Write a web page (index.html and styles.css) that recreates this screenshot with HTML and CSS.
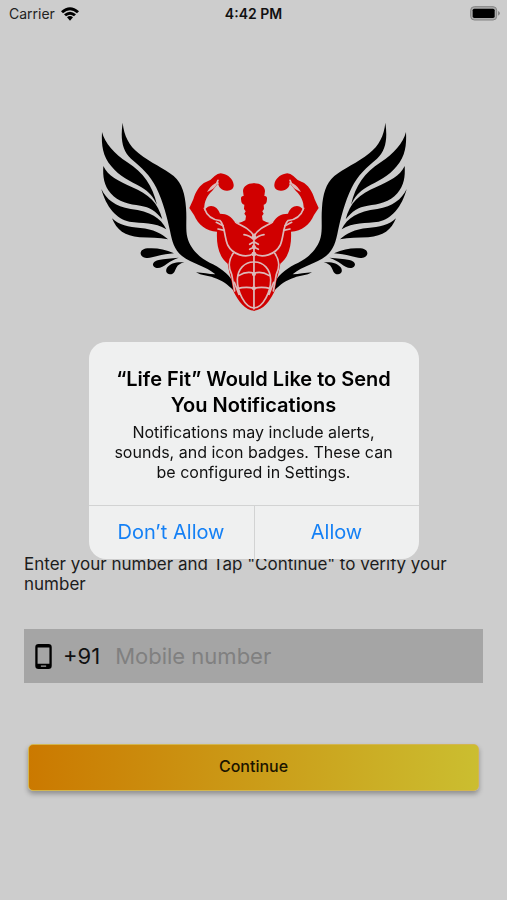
FILE: index.html
```html
<!DOCTYPE html>
<html lang="en">
<head>
<meta charset="utf-8">
<meta name="viewport" content="width=device-width, initial-scale=1">
<title>Life Fit</title>
<link rel="stylesheet" href="styles.css">
</head>
<body>
<div class="screen">
  <header class="status">
    <div class="carrier">
      <span>Carrier</span>
      <svg class="wifi" viewBox="0 0 54 42" aria-hidden="true">
        <path d="M0 13Q27-12 54 13L48 19Q27 0 6 19Z"/>
        <path d="M9 22Q27 6 45 22L39 28Q27 18 15 28Z"/>
        <path d="M18 31Q27 23 36 31L27 41Z"/>
      </svg>
    </div>
    <time class="clock">4:42 PM</time>
    <svg class="battery" viewBox="0 0 90 45" aria-hidden="true">
      <rect x="2" y="2" width="78" height="40" rx="11" fill="#aaa" stroke="#848484" stroke-width="3"/>
      <rect x="8" y="8" width="66" height="28" rx="5"/>
      <path d="M84 15Q90 18 90 22T84 29Z" fill="#888"/>
    </svg>
  </header>

  <main class="content">
    <svg class="logo" viewBox="30 33 924 576" role="img" aria-label="Life Fit">
      <defs>
        <g id="half">
          <g class="wing">
            <path d="M98 38C102 78 117 106 146 130C182 159 222 175 251 198C277 220 285 254 288 293C291 330 286 355 292 382C299 412 325 442 359 458C390 472 416 492 425 510Q433 524 430 541C415 524 395 510 372 503C352 496 334 497 318 487C338 488 356 493 376 493C348 468 306 462 276 438C252 418 246 392 240 362C232 325 220 276 199 233C182 197 154 172 123 146C96 122 91 85 98 38Z"/>
            <path d="M36 66C45 100 72 130 112 157C160 187 187 227 201 284C190 261 176 244 153 231C121 214 88 199 64 169C38 138 34 106 36 66Z"/>
            <path d="M40 168C54 198 85 213 125 231C176 252 204 278 217 328C197 303 180 291 151 287C119 284 84 276 62 250C42 226 38 200 40 168Z"/>
            <path d="M34 237C49 268 75 289 122 297C181 304 212 323 229 358C195 335 156 341 118 335C79 327 48 290 34 237Z"/>
            <path d="M66 325C86 345 116 351 151 354C190 358 215 370 234 388C207 383 180 383 149 382C104 378 80 360 66 325Z"/>
            <path d="M252 430C225 419 205 414 178 415C160 415 151 422 152 431C154 444 171 446 186 442C211 435 229 432 252 430Z"/>
            <path d="M266 443C242 445 224 446 206 450C190 454 185 463 192 470C202 479 219 471 230 462C242 453 252 448 266 443Z"/>
            <path d="M283 457C258 455 241 460 232 472C225 483 229 492 240 493C253 493 254 482 259 473C264 464 272 460 283 457Z"/>
          </g>
          <path class="body" d="M493 220C474 219 460 229 459 243L461 258Q452 257 453 268Q454 284 463 284L462 297L467 304L463 311L468 318L466 331Q456 337 443 340L447 345L435 337C425 320 412 311 390 311C384 294 370 284 354 290Q346 294 343 303C341 276 350 258 367 242L385 219C384 230 394 241 410 242C423 243 432 235 431 224C430 207 413 193 399 191Q386 187 374 198Q363 211 348 216C330 223 316 246 310 268L298 294L312 315C325 344 348 364 381 365C379 402 385 439 413 461C417 488 426 510 429 541C444 574 466 602 493 602Z"/>
          <g class="lines">
            <path d="M384 211Q376 234 357 241Q367 225 384 219"/>
            <path d="M343 295C351 319 371 330 390 332C405 345 402 378 413 405C428 434 468 447 492 430"/>
            <path d="M399 347L379 337M403 361L384 357"/>
            <path d="M437 337C459 348 483 359 492 379M462 374Q480 377 489 387M479 403L491 396M479 418L491 412"/>
            <path d="M430 430C416 449 415 473 425 493L434 543M492 373V596"/>
            <path d="M492 456C463 455 443 479 442 508C441 543 464 593 492 594M446 497Q470 482 492 490M442 536Q468 529 492 535M433 517L447 553"/>
          </g>
          <g class="joints"><circle cx="492" cy="381" r="7"/><circle cx="492" cy="411" r="6"/><circle cx="492" cy="432" r="7"/><circle cx="492" cy="492" r="6"/><circle cx="492" cy="535" r="6"/></g>
        </g>
      </defs>
      <use href="#half"/>
      <use href="#half" transform="matrix(-1 0 0 1 984 0)"/>
    </svg>

    <form class="login">
      <label class="prompt" for="mobile">Enter your number and Tap "Continue" to verify your number</label>
      <div class="field">
        <svg class="phone" viewBox="0 0 50 76" aria-hidden="true">
          <path fill-rule="evenodd" d="M10 0H40Q50 0 50 10V66Q50 76 40 76H10Q0 76 0 66V10Q0 0 10 0ZM7 11V60H43V11ZM17 65V69H33V65Z"/>
        </svg>
        <span class="code">+91</span>
        <input id="mobile" class="number" type="tel" placeholder="Mobile number">
      </div>
      <button class="continue" type="button">Continue</button>
    </form>
  </main>
</div>

<div class="overlay">
  <section class="alert" role="alertdialog" aria-modal="true" aria-labelledby="alert-title" aria-describedby="alert-text">
    <div class="message">
      <h1 id="alert-title">“Life Fit” Would Like to Send You Notifications</h1>
      <p id="alert-text">Notifications may include alerts, sounds, and icon badges. These can be configured in Settings.</p>
    </div>
    <div class="actions">
      <button type="button">Don’t Allow</button>
      <button type="button">Allow</button>
    </div>
  </section>
</div>
</body>
</html>
```
FILE: styles.css
```css
* {
  box-sizing: border-box;
}

body {
  margin: 0;
  background: #cdcdcd;
  color: #111;
  font-family: Inter, "Liberation Sans", sans-serif;
}

button,
input {
  font: inherit;
}

.screen {
  min-height: 100vh;
}

.status {
  display: grid;
  grid-template-columns: 1fr auto 1fr;
  align-items: center;
  height: 27px;
  padding: 0 7px;
  font-size: 14px;
}

.carrier {
  display: flex;
  align-items: center;
  gap: 6px;
  padding-left: 2px;
  color: #222;
}

.wifi {
  width: 18px;
  height: 14px;
}

.clock {
  font-weight: 600;
}

.battery {
  justify-self: end;
  width: 30px;
  height: 15px;
}

.content {
  padding: 94px 24px 0;
}

.logo {
  display: block;
  width: 308px;
  max-width: 100%;
  margin: 0 auto;
}

.wing {
  fill: #000;
}

.body {
  fill: #d00000;
}

.lines {
  fill: none;
  stroke: #dcb9b9;
  stroke-width: 5px;
  stroke-linecap: round;
}

.joints {
  fill: #dcb9b9;
}

.login {
  margin-top: 241px;
}

.prompt {
  display: block;
  color: #1c1c1c;
  font-size: 17px;
  line-height: 20px;
}

.field {
  display: flex;
  align-items: center;
  height: 54px;
  margin-top: 35px;
  padding: 0 11px;
  background: #a5a5a5;
  font-size: 22px;
}

.phone {
  flex: none;
  width: 17px;
  height: 25px;
}

.code {
  margin: 0 15px 0 11px;
}

.number {
  flex: 1;
  min-width: 0;
  padding: 0;
  border: 0;
  outline: 0;
  background: transparent;
  color: #111;
}

.number::placeholder {
  color: #808080;
  opacity: 1;
}

.continue {
  display: block;
  width: calc(100% - 8px);
  height: 47px;
  margin: 61px auto 0;
  padding: 0 0 4px;
  border: 1px solid #d3b64f;
  border-radius: 5px;
  background: linear-gradient(90deg, #cb7900, #cbbe30) border-box;
  box-shadow: 0 3px 5px rgba(0, 0, 0, 0.3);
  color: #1b1400;
  font-size: 16px;
  font-weight: 500;
}

.overlay {
  position: fixed;
  inset: 0;
  display: flex;
  align-items: center;
  justify-content: center;
}

.alert {
  width: 330px;
  overflow: hidden;
  border-radius: 17px;
  background: #eff0f0;
  text-align: center;
}

.message {
  padding: 24px 24px 23px;
}

.message h1 {
  margin: 0;
  color: #000;
  font-size: 20px;
  font-weight: 600;
  line-height: 26px;
}

.message p {
  margin: 4px 0 0;
  font-size: 16px;
  line-height: 20px;
}

.actions {
  display: grid;
  grid-template-columns: 1fr 1fr;
  border-top: 1px solid #d2d3d3;
}

.actions button {
  height: 53px;
  padding: 0;
  border: 0;
  background: transparent;
  color: #1480f5;
  font-size: 20px;
}

.actions button + button {
  border-left: 1px solid #d2d3d3;
}
```
